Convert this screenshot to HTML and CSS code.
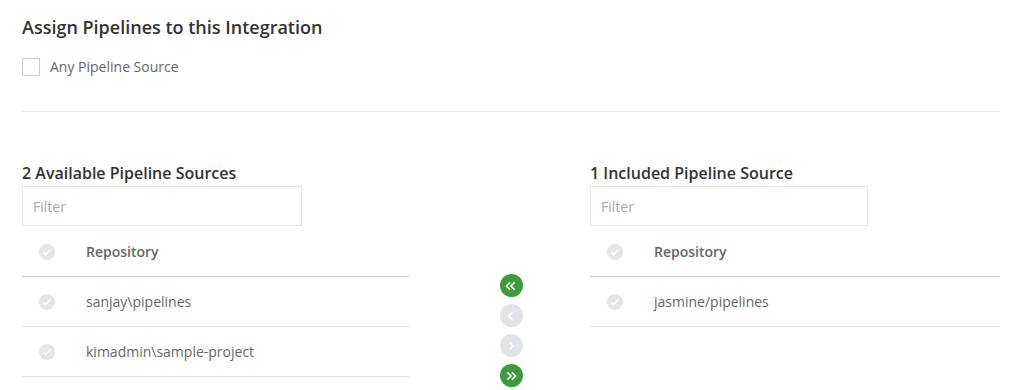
FILE: index.html
```html
<!DOCTYPE html>
<html lang="en">
<head>
    <meta charset="UTF-8">
    <title>Assign Pipelines</title>
    <link rel="stylesheet" href="styles.css">
</head>
<body>
    <div class="page">
        <h2 class="title">Assign Pipelines to this Integration</h2>

        <label class="any-source">
            <span class="box"></span>
            <span>Any Pipeline Source</span>
        </label>

        <hr class="divider">

        <div class="picker">
            <!-- verfuegbare Quellen -->
            <div class="side">
                <h3 class="side-title">2 Available Pipeline Sources</h3>
                <input class="filter" type="text" placeholder="Filter">
                <div class="list list-left">
                    <div class="row head">
                        <span class="dot"><svg viewBox="0 0 16 16"><path d="M4.5 8.3l2.3 2.2 4.7-5" /></svg></span>
                        <span>Repository</span>
                    </div>
                    <div class="row">
                        <span class="dot"><svg viewBox="0 0 16 16"><path d="M4.5 8.3l2.3 2.2 4.7-5" /></svg></span>
                        <span>sanjay\pipelines</span>
                    </div>
                    <div class="row">
                        <span class="dot"><svg viewBox="0 0 16 16"><path d="M4.5 8.3l2.3 2.2 4.7-5" /></svg></span>
                        <span>kimadmin\sample-project</span>
                    </div>
                </div>
            </div>

            <!-- Buttons in der Mitte -->
            <div class="moves">
                <button class="move on"><svg viewBox="0 0 24 24"><path d="M11 8l-4 4 4 4M16 8l-4 4 4 4" /></svg></button>
                <button class="move"><svg viewBox="0 0 24 24"><path d="M13.5 8l-4 4 4 4" /></svg></button>
                <button class="move"><svg viewBox="0 0 24 24"><path d="M10.5 8l4 4-4 4" /></svg></button>
                <button class="move on"><svg viewBox="0 0 24 24"><path d="M8 8l4 4-4 4M13 8l4 4-4 4" /></svg></button>
            </div>

            <!-- enthaltene Quellen -->
            <div class="side">
                <h3 class="side-title">1 Included Pipeline Source</h3>
                <input class="filter filter-right" type="text" placeholder="Filter">
                <div class="list">
                    <div class="row head">
                        <span class="dot"><svg viewBox="0 0 16 16"><path d="M4.5 8.3l2.3 2.2 4.7-5" /></svg></span>
                        <span>Repository</span>
                    </div>
                    <div class="row">
                        <span class="dot"><svg viewBox="0 0 16 16"><path d="M4.5 8.3l2.3 2.2 4.7-5" /></svg></span>
                        <span>jasmine/pipelines</span>
                    </div>
                </div>
            </div>
        </div>
    </div>
</body>
</html>
```

FILE: styles.css
```css
/* Grundlayout */
* {
    margin: 0;
    padding: 0;
    box-sizing: border-box;
}

body {
    font-family: "Open Sans", Arial, sans-serif;
    background-color: #fff;
    color: #666;
}

.page {
    padding: 15px 13px 0 22px;
}

.title {
    font-size: 18px;
    font-weight: 600;
    line-height: 24px;
    color: #333;
}

.any-source {
    display: flex;
    align-items: center;
    gap: 10px;
    margin-top: 19px;
    font-size: 14px;
    line-height: 18px;
    color: #666;
}

.box {
    width: 18px;
    height: 18px;
    border: 1px solid #ccc;
    background: #fff;
}

.divider {
    border: none;
    border-top: 1px solid #e5e5e5;
    margin-top: 35px;
}

.picker {
    display: grid;
    grid-template-columns: 410px 1fr 410px;
    margin-top: 50px;
}

.side-title {
    font-size: 16px;
    font-weight: 600;
    line-height: 22px;
    color: #333;
}

.filter {
    display: block;
    width: 280px;
    height: 40px;
    margin-top: 2px;
    margin-bottom: 1px;
    padding: 0 10px;
    border: 1px solid #e5e5e5;
    font-family: inherit;
    font-size: 14px;
    color: #666;
    outline: none;
}

.filter-right {
    width: 278px;
}

.filter::placeholder {
    color: #aaa;
}

.list-left {
    width: 387px;
}

.row {
    display: flex;
    align-items: center;
    height: 50px;
    border-bottom: 1px solid #e0e0e0;
    font-size: 14px;
    color: #666;
}

.row.head {
    font-weight: 600;
    border-bottom-color: #ccc;
}

.dot {
    width: 16px;
    height: 16px;
    border-radius: 50%;
    background-color: #e6e6e6;
    margin: 0 31px 0 17px;
    display: flex;
}

.dot svg {
    width: 16px;
    height: 16px;
    fill: none;
    stroke: #fff;
    stroke-width: 1.4;
}

.moves {
    display: flex;
    flex-direction: column;
    align-items: center;
    gap: 7px;
    padding-top: 112px;
}

.move {
    width: 23px;
    height: 23px;
    border-radius: 50%;
    border: none;
    background-color: #e1e4e7;
    display: flex;
    align-items: center;
    justify-content: center;
    cursor: pointer;
}

.move.on {
    background-color: #3d9b3d;
}

.move svg {
    width: 22px;
    height: 22px;
    fill: none;
    stroke: #fff;
    stroke-width: 1.8;
}
```
